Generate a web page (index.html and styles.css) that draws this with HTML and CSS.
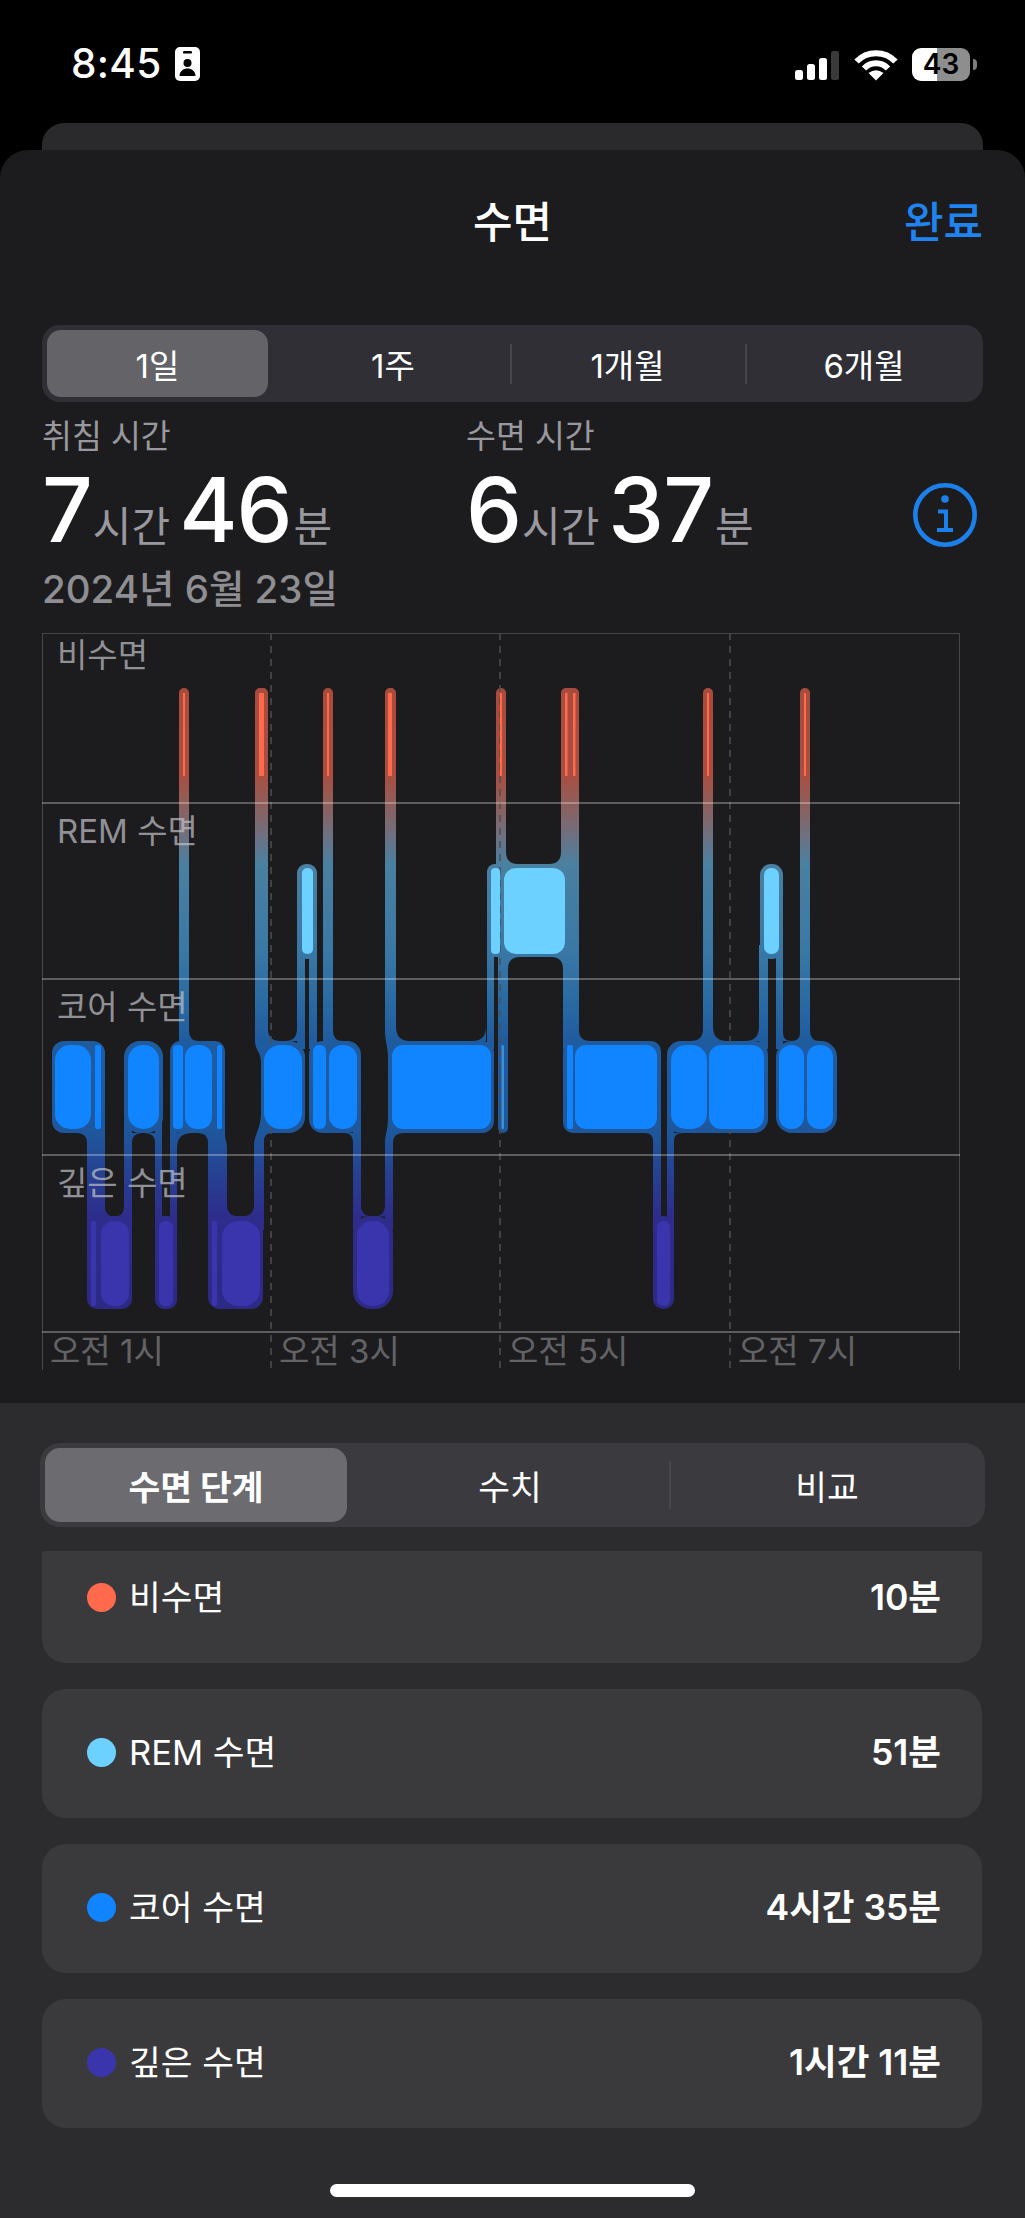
FILE: index.html
```html
<!DOCTYPE html>
<html lang="ko">
<head>
<meta charset="utf-8">
<title>수면</title>
<link rel="stylesheet" href="styles.css">
</head>
<body>
<div class="phone">
  <header class="status">
    <div class="status-left">
      <span class="time">8:45</span>
      <svg class="badge" viewBox="0 0 25 34"><rect width="25" height="34" rx="5" fill="#fff"/><rect x="8" y="4" width="9" height="2.6" rx="1.2" fill="#000"/><circle cx="12.5" cy="16" r="4" fill="#000"/><path d="M4.5 29c0-5 4-7.5 8-7.5s8 2.500 8 7.500z" fill="#000"/></svg>
    </div>
    <div class="status-right">
      <div class="signal"><i class="b1"></i><i class="b2"></i><i class="b3"></i><i class="b4"></i></div>
      <svg class="wifi" viewBox="0 0 44 33"><g fill="none" stroke="#fff" stroke-width="6"><path d="M2.500 13.500A27 27 0 0 1 41.500 13.500"/><path d="M10 20.500A16.500 16.500 0 0 1 34 20.500"/></g><path d="M22 32.500L14.500 25Q22 19.500 29.500 25Z" fill="#fff"/></svg>
      <div class="battery">43</div>
      <div class="nub"></div>
    </div>
  </header>
  <div class="backcard"></div>
  <main class="sheet">
    <div class="navbar">
      <span></span>
      <h1 class="title">수면</h1>
      <span class="done">완료</span>
    </div>
    <div class="seg seg-top">
      <div class="seg-item is-on">1일</div>
      <div class="seg-item second">1주</div>
      <div class="seg-item div">1개월</div>
      <div class="seg-item div">6개월</div>
    </div>
    <section class="stats">
      <div class="stat">
        <div class="stat-label">취침 시간</div>
        <div class="stat-value"><b>7</b><span class="gap1">시간</span><b class="m">46</b><span>분</span></div>
      </div>
      <div class="stat">
        <div class="stat-label">수면 시간</div>
        <div class="stat-value"><b>6</b><span class="gap1">시간</span><b class="m">37</b><span>분</span></div>
      </div>
      <svg class="info" viewBox="0 0 64 64"><circle cx="32" cy="32" r="29.700" fill="none" stroke="#1c80ea" stroke-width="4.600"/><circle cx="32" cy="16" r="3.800" fill="#1c80ea"/><path d="M25 28.500h8V47M24 47h16" fill="none" stroke="#1c80ea" stroke-width="4"/></svg>
    </section>
    <div class="date">2024년 6월 23일</div>
    <div class="chart">
      <svg class="plot" viewBox="42 633 918 740">
        <defs>
          <linearGradient id="halo" gradientUnits="userSpaceOnUse" x1="0" y1="688" x2="0" y2="1309">
            <stop offset="0" stop-color="#a84b3c"/>
            <stop offset=".143" stop-color="#a84f42"/>
            <stop offset=".185" stop-color="#8f5e5a"/>
            <stop offset=".236" stop-color="#6f7080"/>
            <stop offset=".283" stop-color="#4a80a0"/>
            <stop offset=".42" stop-color="#3a78a5"/>
            <stop offset=".5" stop-color="#2a6ba3"/>
            <stop offset=".567" stop-color="#1f5c9f"/>
            <stop offset=".715" stop-color="#1e579c"/>
            <stop offset=".775" stop-color="#254393"/>
            <stop offset=".85" stop-color="#2e2d8c"/>
            <stop offset="1" stop-color="#2d2a85"/>
          </linearGradient>
        </defs>
        <g class="halo">
          <rect x="179" y="688" width="10" height="360" rx="5"/>
          <path d="M255 693a5 5 0 0 1 5-5h3a5 5 0 0 1 5 5V1062H261C261 1052 255 1050 255 1041Z"/>
          <rect x="323" y="688" width="10" height="360" rx="5"/>
          <path d="M385 693a5 5 0 0 1 5-5h1a5 5 0 0 1 5 5V1056H388C388 1048 385 1040 385 1032Z"/>
          <rect x="496" y="688" width="10" height="190" rx="5"/>
          <rect x="561" y="688" width="18" height="190" rx="5"/>
          <rect x="703" y="688" width="10" height="360" rx="5"/>
          <rect x="800" y="688" width="10" height="360" rx="5"/>

          <rect x="297" y="864" width="20" height="95" rx="9"/>
          <rect x="487" y="864" width="92" height="93" rx="8"/>
          <rect x="760" y="864" width="23" height="95" rx="11"/>

          <rect x="297" y="945" width="8" height="104"/>
          <rect x="309" y="945" width="8" height="104"/>
          <rect x="487" y="945" width="7" height="104"/>
          <rect x="498" y="945" width="10" height="104"/>
          <rect x="563" y="945" width="16" height="104"/>
          <rect x="759" y="945" width="9" height="104"/>
          <rect x="776" y="945" width="7" height="104"/>

          <rect x="52" y="1041" width="53" height="92" rx="12"/>
          <rect x="124" y="1041" width="39" height="92" rx="16"/>
          <rect x="170" y="1041" width="55" height="92" rx="10"/>
          <rect x="261" y="1041" width="44" height="92" rx="16"/>
          <rect x="261" y="1041" width="18" height="18"/>
          <rect x="261" y="1115" width="18" height="18"/>
          <rect x="309" y="1041" width="52" height="92" rx="14"/>
          <rect x="388" y="1041" width="106" height="92" rx="12"/>
          <rect x="388" y="1041" width="14" height="14"/>
          <rect x="388" y="1119" width="14" height="14"/>
          <rect x="498" y="1041" width="10" height="92" rx="5"/>
          <rect x="563" y="1041" width="98" height="92" rx="10"/>
          <rect x="667" y="1041" width="101" height="92" rx="14"/>
          <rect x="776" y="1041" width="61" height="92" rx="16"/>

          <rect x="87" y="1133" width="18" height="97"/>
          <rect x="93" y="1120" width="12" height="14"/>
          <rect x="124" y="1120" width="8" height="110"/>
          <rect x="155" y="1120" width="7" height="110"/>
          <rect x="170" y="1120" width="7" height="110"/>
          <rect x="208" y="1120" width="17" height="14"/>
          <path d="M208 1133H225C225 1140 227 1142 227 1148V1230H208Z"/>
          <path d="M254 1146C254 1134 261 1130 261 1112H264V1230H254Z"/>
          <rect x="353" y="1120" width="8" height="110"/>
          <path d="M385 1143C385 1135 388 1130 388 1118H393V1230H385Z"/>
          <rect x="653" y="1120" width="8" height="110"/>
          <rect x="667" y="1120" width="7" height="110"/>

          <rect x="87" y="1216" width="45" height="93" rx="10"/>
          <rect x="155" y="1216" width="22" height="93" rx="9"/>
          <rect x="208" y="1216" width="55" height="93" rx="12"/>
          <rect x="353" y="1216" width="40" height="93" rx="18"/>
          <rect x="653" y="1216" width="21" height="93" rx="10"/>

          <path d="M105 1207Q105 1216.500 114.500 1216.500H105ZM124 1207Q124 1216.500 114.500 1216.500H124Z"/>
          <path d="M227 1205Q227 1216.500 240 1216.500H227ZM254 1205Q254 1216.500 241 1216.500H254Z"/>
          <path d="M361 1205Q361 1216.500 373 1216.500H361ZM385 1205Q385 1216.500 374 1216.500H385Z"/>
          <path d="M268 1029Q268 1041 280 1041H268ZM297 1029Q297 1041 285 1041H297Z"/>
          <path d="M396 1027Q396 1041 410 1041H396ZM486 1027Q486 1041 472 1041H486Z"/>
          <path d="M713 1027Q713 1041 727 1041H713ZM759 1027Q759 1041 745 1041H759Z"/>
          <path d="M783 1033Q783 1041 791.500 1041H783ZM800 1033Q800 1041 791.500 1041H800Z"/>
          <path d="M506 852Q506 864 518 864H506ZM561 852Q561 864 549 864H561Z"/>
          <path d="M508 969Q508 957 520 957H508ZM563 969Q563 957 551 957H563Z"/>
          <path d="M189 1031Q189 1041 199 1041H189ZM333 1031Q333 1041 343 1041H333ZM579 1031Q579 1041 591 1041H579ZM703 1029Q703 1041 691 1041H703ZM810 1031Q810 1041 820 1041H810Z"/>
          <path d="M87 1143Q87 1133 77 1133H87ZM208 1143Q208 1133 198 1133H208ZM177 1148Q177 1133 192 1133H177ZM155 1143Q155 1133 145 1133H155ZM132 1143Q132 1133 142 1133H132ZM393 1143Q393 1133 403 1133H393ZM353 1143Q353 1133 345 1133H353ZM653 1141Q653 1133 645 1133H653ZM674 1141Q674 1133 682 1133H674ZM264 1141Q264 1133 272 1133H264Z"/>
        </g>
        <g class="grid-d">
          <path d="M271 633V1370M500 633V1370M730 633V1370"/>
        </g>
        <g class="awake">
          <rect x="183" y="693" width="2" height="83"/>
          <rect x="259" y="693" width="5" height="83"/>
          <rect x="327" y="693" width="2" height="83"/>
          <rect x="388" y="693" width="4" height="83"/>
          <rect x="500" y="693" width="2" height="83"/>
          <rect x="565" y="693" width="2.500" height="83"/>
          <rect x="573" y="693" width="2.500" height="83"/>
          <rect x="707" y="693" width="2" height="83"/>
          <rect x="804" y="693" width="2" height="83"/>
        </g>
        <g class="rem">
          <rect x="302" y="868" width="11" height="86" rx="5"/>
          <rect x="491" y="868" width="9" height="86" rx="4"/>
          <rect x="504" y="868" width="61" height="86" rx="12"/>
          <rect x="764" y="868" width="15" height="86" rx="7"/>
        </g>
        <g class="core">
          <rect x="55" y="1045" width="36" height="84" rx="15"/>
          <rect x="95" y="1045" width="6" height="84" rx="2"/>
          <rect x="128" y="1045" width="31" height="84" rx="15"/>
          <rect x="173" y="1045" width="10" height="84" rx="4"/>
          <rect x="185" y="1045" width="27" height="84" rx="12"/>
          <rect x="217" y="1045" width="5" height="84" rx="2"/>
          <rect x="264" y="1045" width="38" height="84" rx="16"/>
          <rect x="313" y="1045" width="13" height="84" rx="6"/>
          <rect x="329" y="1045" width="28" height="84" rx="13"/>
          <rect x="392" y="1045" width="99" height="84" rx="11"/>
          <rect class="core-dim" x="501.500" y="1045" width="2.500" height="84" rx="1"/>
          <rect x="567" y="1045" width="6" height="84" rx="2"/>
          <rect x="575" y="1045" width="82" height="84" rx="11"/>
          <rect x="671" y="1045" width="36" height="84" rx="15"/>
          <rect x="709" y="1045" width="55" height="84" rx="12"/>
          <rect x="779" y="1045" width="25" height="84" rx="12"/>
          <rect x="807" y="1045" width="26" height="84" rx="12"/>
        </g>
        <g class="deep">
          <rect x="91" y="1221" width="5" height="85" rx="2"/>
          <rect x="101" y="1221" width="28" height="85" rx="13"/>
          <rect x="159" y="1221" width="14" height="85" rx="6"/>
          <rect x="212" y="1221" width="5" height="85" rx="2"/>
          <rect x="222" y="1221" width="38" height="85" rx="16"/>
          <rect x="357" y="1221" width="32" height="85" rx="15"/>
          <rect x="657" y="1221" width="13" height="85" rx="6"/>
        </g>
        <g class="grid-v">
          <path d="M42.500 633V1370M959.500 633V1370"/>
        </g>
        <path class="grid-top" d="M42 633.500H960"/>
        <path class="grid-h" d="M42 803H960M42 979H960M42 1155H960M42 1332H960"/>
      </svg>
      <div class="rows">
        <div class="row-label first">비수면</div>
        <div class="row-label">REM 수면</div>
        <div class="row-label">코어 수면</div>
        <div class="row-label">깊은 수면</div>
      </div>
      <div class="axis">
        <span>오전 1시</span><span>오전 3시</span><span>오전 5시</span><span>오전 7시</span>
      </div>
    </div>
  </main>
  <section class="lower">
    <div class="seg seg-low">
      <div class="seg-item is-on strong">수면 단계</div>
      <div class="seg-item nudge">수치</div>
      <div class="seg-item div">비교</div>
    </div>
    <div class="list">
      <div class="card card-clipped"><span class="dot awake-dot"></span><span class="name">비수면</span><span class="val">10분</span></div>
      <div class="card"><span class="dot rem-dot"></span><span class="name">REM 수면</span><span class="val">51분</span></div>
      <div class="card"><span class="dot core-dot"></span><span class="name">코어 수면</span><span class="val">4시간 35분</span></div>
      <div class="card"><span class="dot deep-dot"></span><span class="name">깊은 수면</span><span class="val">1시간 11분</span></div>
    </div>
    <div class="home"></div>
  </section>
</div>
</body>
</html>
```
FILE: styles.css
```css
* { box-sizing: border-box; }
html, body { margin: 0; padding: 0; background: #000; }
body { font-family: "Inter", "Noto Sans CJK KR", "Noto Sans", sans-serif; color: #fff; }
.phone { width: 1025px; height: 2218px; overflow: hidden; display: flex; flex-direction: column; background: #000; }

/* status bar */
.status { height: 123px; padding: 46px 48px 0 71px; display: flex; justify-content: space-between; align-items: flex-start; flex: none; }
.status-left { display: flex; align-items: center; gap: 13px; }
.time { font-size: 40.500px; line-height: 36px; font-weight: 500; letter-spacing: .3px; }
.badge { width: 25px; height: 34px; display: block; }
.status-right { display: flex; align-items: flex-start; padding-top: 2px; }
.signal { display: flex; align-items: flex-end; gap: 4px; height: 31px; margin-top: 1px; }
.signal i { display: block; width: 8px; border-radius: 2.500px; background: #fff; }
.signal .b1 { height: 10px; }
.signal .b2 { height: 16px; }
.signal .b3 { height: 22px; }
.signal .b4 { height: 29px; background: #3a3a3a; }
.wifi { width: 44px; height: 33px; margin-left: 15px; display: block; }
.battery { width: 58px; height: 33px; margin-left: 14px; border-radius: 9px; background: linear-gradient(90deg, #fff 0 25px, #8e8e8e 25px 58px); color: #000; font-size: 28px; line-height: 33px; font-weight: 600; text-align: center; }
.nub { width: 4px; height: 11px; margin: 11px 0 0 3px; border-radius: 0 4px 4px 0; background: #7d7d7d; }

/* stacked cards */
.backcard { height: 27px; margin: 0 42px; flex: none; background: #2a2a2c; border-radius: 22px 22px 0 0; }
.sheet { height: 1253px; flex: none; background: #1c1c1e; border-radius: 28px 28px 0 0; padding: 0 42px; }

.navbar { height: 175px; padding-top: 50px; display: grid; grid-template-columns: 1fr auto 1fr; align-items: start; }
.title { margin: 0; font-size: 43px; line-height: 44px; font-weight: 500; }
.done { justify-self: end; font-size: 43px; line-height: 44px; font-weight: 500; color: #1f84f0; }

/* segmented controls */
.seg { display: grid; align-items: center; }
.seg-item { display: flex; align-items: center; justify-content: center; position: relative; }
.seg-item.is-on { align-self: stretch; }
.seg-item.div::before { content: ""; position: absolute; left: 0; top: 50%; width: 2px; background: #48484c; }
.seg-top { width: 941px; height: 77px; padding: 5px 0 5px 5px; border-radius: 18px; background: #2f2f35; grid-template-columns: 221px 242px 235px 1fr; font-size: 33px; }
.seg-top .seg-item { height: 67px; }
.seg-top .is-on { border-radius: 14px; background: #636368; }
.seg-top .second { padding-left: 8px; }
.seg-top .div::before { height: 40px; margin-top: -20px; }

/* stats */
.stats { display: grid; grid-template-columns: 424px 1fr 64px; height: 150px; padding-top: 15px; }
.stat-label { font-size: 32.500px; line-height: 40px; color: #98989e; }
.stat-value { display: flex; align-items: baseline; height: 96px; margin-top: 5px; color: #98989e; font-size: 42px; line-height: 96px; }
.stat-value b { font-size: 89px; font-weight: 500; color: #fff; letter-spacing: -1px; }
.stat-value .gap1 { margin-left: 1px; }
.stat-value .m { margin-left: 9px; margin-right: 2px; }
.info { width: 64px; height: 64px; margin: 66px 0 0 -6px; display: block; }
.date { font-size: 38.500px; line-height: 46px; font-weight: 500; color: #8e8e93; height: 67px; margin-top: 14px; }

/* chart */
.chart { position: relative; width: 918px; height: 740px; }
.plot { position: absolute; inset: 0; width: 918px; height: 740px; display: block; }
.halo { fill: url(#halo); }
.awake { fill: #ff6a4d; }
.rem { fill: #6dd1ff; }
.core { fill: #1184ff; }
.core-dim { fill: #3a8fdc; }
.deep { fill: #3a35ad; }
.grid-v path { stroke: #47474a; stroke-width: 1; fill: none; }
.grid-d path { stroke: #4d4d50; stroke-width: 1.500; stroke-dasharray: 7 6; fill: none; }
.grid-top { stroke: #454548; stroke-width: 1; fill: none; }
.grid-h { stroke: rgba(255,255,255,.38); stroke-width: 1.500; fill: none; }
.rows { position: relative; display: flex; flex-direction: column; padding-left: 15px; }
.row-label { height: 176px; padding-top: 9px; font-size: 33px; line-height: 38px; color: rgba(190,190,196,.72); }
.row-label.first { height: 170px; padding-top: 3px; }
.axis { position: absolute; left: 0; top: 699px; width: 918px; display: grid; grid-template-columns: 229px 229px 230px 1fr; font-size: 33px; line-height: 38px; color: #636366; }
.axis span { padding-left: 8px; white-space: nowrap; }

/* lower panel */
.lower { flex: 1; background: #2c2c2e; padding: 40px 40px 0 40px; display: flex; flex-direction: column; }
.seg-low { width: 945px; height: 84px; padding: 5px 0 5px 5px; border-radius: 20px; background: #3a3a3f; grid-template-columns: 302px 322px 1fr; font-size: 34.500px; flex: none; }
.seg-low .seg-item { height: 74px; }
.seg-low .is-on { border-radius: 15px; background: #6b6b70; }
.seg-low .strong { font-weight: 700; }
.seg-low .nudge { padding-left: 4px; }
.seg-low .div::before { height: 48px; margin-top: -24px; }

.list { margin: 24px 2px 0; width: 940px; display: flex; flex-direction: column; gap: 26px; flex: none; }
.card { height: 129px; padding: 44px 41px 0 45px; display: flex; align-items: flex-start; background: #3a3a3c; border-radius: 24px; font-size: 34.500px; line-height: 40px; flex: none; }
.card-clipped { height: 112px; padding-top: 27px; border-radius: 3px 3px 24px 24px; }
.dot { width: 29px; height: 29px; border-radius: 50%; margin: 5px 13px 0 0; flex: none; }
.awake-dot { background: #ff6a4d; }
.rem-dot { background: #6dd1ff; }
.core-dot { background: #1184ff; }
.deep-dot { background: #3a35ad; }
.name { flex: 1; }
.val { font-weight: 600; font-size: 35.500px; }
.home { width: 365px; height: 13px; margin: 56px 0 0 290px; border-radius: 7px; background: #fff; flex: none; }
```
